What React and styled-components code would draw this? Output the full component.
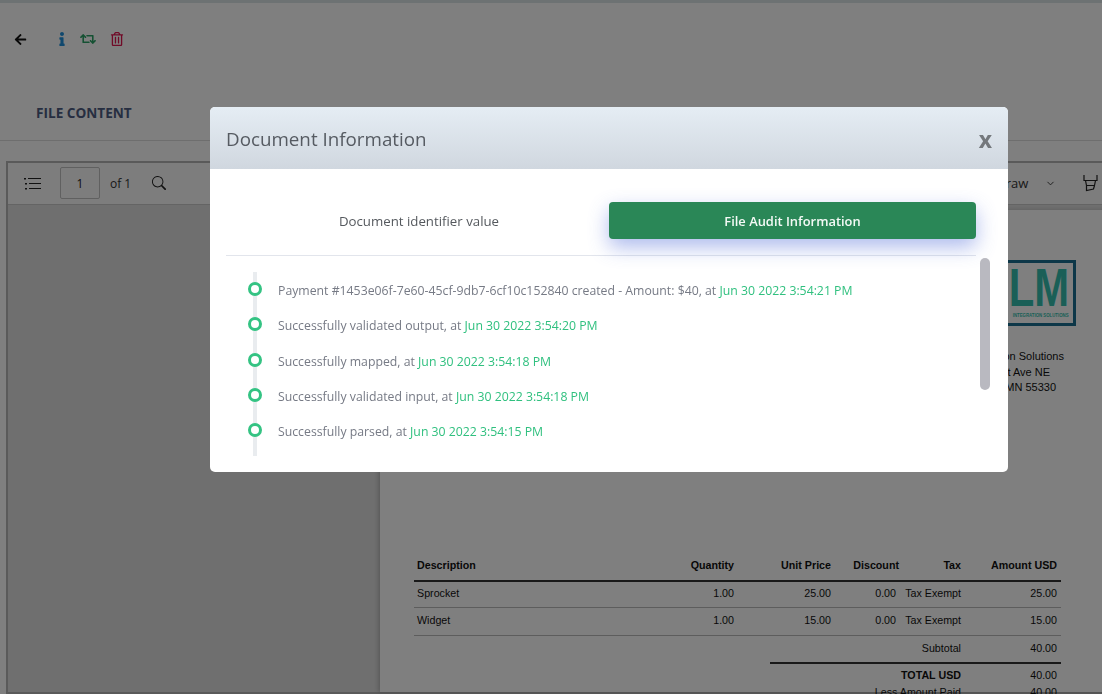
import React from "react";
import styled, { createGlobalStyle } from "styled-components";
import { FaArrowLeft, FaInfo, FaRetweet, FaRegTrashAlt } from "react-icons/fa";
import { FiChevronDown } from "react-icons/fi";
import { BsSearch } from "react-icons/bs";

const GlobalStyle = createGlobalStyle`
  html, body {
    margin: 0;
    padding: 0;
    height: 100%;
    overflow: hidden;
    background: #fff;
    font-family: "Open Sans", "Noto Sans", sans-serif;
  }
  * { box-sizing: border-box; }
`;

const Page = styled.div`
  height: 694px;
  overflow: hidden;
  display: flex;
  flex-direction: column;
`;

const TopStrip = styled.div`
  height: 3px;
  flex: none;
  background: #dbe4e6;
`;

const ActionBar = styled.div`
  height: 72px;
  flex: none;
  display: flex;
  align-items: center;
  padding: 0 0 0 14px;
`;

const IconButton = styled.span`
  display: inline-flex;
  align-items: center;
  justify-content: center;
  margin-left: ${(p) => p.$gap ?? 0}px;
  color: ${(p) => p.$color};
  font-size: ${(p) => p.$size}px;
`;

const TabBar = styled.div`
  height: 66px;
  flex: none;
  padding: 26px 0 0 36px;
  border-bottom: 1px solid #dcdcdc;
`;

const TabLabel = styled.span`
  font-size: 13.6px;
  font-weight: 700;
  line-height: 18px;
  color: #4d5c82;
`;

const Viewer = styled.div`
  margin: 20px 0 0 6px;
  width: 1200px;
  flex: 1;
  border: 2px solid #b5b5b5;
  display: flex;
  flex-direction: column;
  min-height: 0;
  background: #dedede;
`;

const Toolbar = styled.div`
  height: 42px;
  flex: none;
  display: flex;
  align-items: center;
  padding: 0 0 1px 16px;
  background: #fafafa;
  border-bottom: 1px solid #c8c8c8;
  color: #222;
`;

const PageInput = styled.div`
  width: 40px;
  height: 32px;
  margin-left: 19px;
  border: 1px solid #c0c0c0;
  border-radius: 2px;
  display: flex;
  align-items: center;
  justify-content: center;
  font-size: 12px;
`;

const PageCount = styled.span`
  margin-left: 10px;
  font-size: 12px;
  color: #333;
`;

const SearchIcon = styled(BsSearch)`
  margin-left: 21px;
  font-size: 14px;
`;

const DrawSelect = styled.div`
  margin-left: 830px;
  width: 60px;
  display: flex;
  align-items: center;
  justify-content: space-between;
  font-size: 13px;
  color: #333;
`;

const Highlighter = styled.svg`
  margin-left: 27px;
  width: 15px;
  height: 18px;
`;

const ViewerBody = styled.div`
  flex: 1;
  display: flex;
  min-height: 0;
  padding-top: 5px;
`;

const Sidebar = styled.div`
  width: 372px;
  flex: none;
`;

const Sheet = styled.div`
  flex: 1;
  background: #fff;
  box-shadow: -2px 0 4px rgba(0, 0, 0, 0.18);
  padding: 50px 0 0 34px;
  font-family: "Liberation Sans", Arial, sans-serif;
  font-size: 10.7px;
  color: #111;
`;

const Letterhead = styled.div`
  width: 647px;
  height: 289px;
  display: flex;
  flex-direction: column;
  align-items: flex-end;
`;

const Logo = styled.div`
  width: 96px;
  height: 66px;
  margin-right: -15px;
  padding: 4px 4px 0 0;
  border: 3px solid #1a6f90;
  color: #34bfae;
  display: flex;
  flex-direction: column;
  align-items: flex-end;
`;

const LogoLetters = styled.span`
  font-size: 54px;
  line-height: 40px;
  font-weight: 700;
  transform: scaleX(0.773);
  transform-origin: right center;
`;

const LogoCaption = styled.span`
  margin-top: 5px;
  font-size: 6px;
  font-weight: 700;
  line-height: 7px;
  white-space: nowrap;
  transform: scaleX(0.72);
  transform-origin: right center;
`;

const Address = styled.div`
  margin-top: 23px;
  display: flex;
  flex-direction: column;
  align-items: flex-end;
`;

const AddressLine = styled.div`
  font-size: 11px;
  line-height: 15.5px;
  white-space: nowrap;
  margin-right: ${(p) => p.$inset}px;
`;

const InvoiceRow = styled.div`
  width: 647px;
  display: grid;
  grid-template-columns: 224px 100px 97px 68px 62px 96px;
  align-items: center;
  height: ${(p) => p.$height}px;
  padding-bottom: ${(p) => (p.$head ? 0 : 3)}px;
  border-bottom: ${(p) => (p.$head ? "2px solid #333" : "1px solid #bbb")};
  font-weight: ${(p) => (p.$head ? 700 : 400)};
`;

const Cell = styled.span`
  padding: 0 ${(p) => p.$pad ?? 4}px 0 ${(p) => (p.$left ? 3 : 0)}px;
  text-align: ${(p) => (p.$left ? "left" : "right")};
  white-space: nowrap;
`;

const TotalRow = styled.div`
  width: 291px;
  margin-left: 356px;
  display: grid;
  grid-template-columns: 195px 96px;
  align-items: center;
  height: ${(p) => p.$height}px;
  padding-bottom: ${(p) => (p.$rule ? 2 : 0)}px;
  border-bottom: ${(p) => (p.$rule ? "2px solid #333" : "none")};
`;

const TotalLabel = styled(Cell)`
  font-weight: ${(p) => (p.$bold ? 700 : 400)};
`;

const Backdrop = styled.div`
  position: fixed;
  inset: 0;
  background: rgba(0, 0, 0, 0.5);
`;

const Modal = styled.div`
  position: fixed;
  left: 210px;
  top: 107px;
  width: 798px;
  height: 365px;
  background: #fff;
  border-radius: 5px;
  overflow: hidden;
  display: flex;
  flex-direction: column;
`;

const ModalHeader = styled.div`
  height: 62px;
  flex: none;
  display: flex;
  align-items: center;
  justify-content: space-between;
  padding: 2px 16px 0;
  background: linear-gradient(180deg, #e5edf4 0%, #d0d7df 100%);
`;

const ModalTitle = styled.h2`
  margin: 0;
  font-size: 18.8px;
  font-weight: 400;
  color: #565b62;
`;

const CloseMark = styled.span`
  font-size: 23px;
  font-weight: 700;
  line-height: 20px;
  color: #74787c;
`;

const ModalBody = styled.div`
  flex: 1;
  padding: 33px 32px 0 16px;
  position: relative;
`;

const SwitchRow = styled.div`
  display: grid;
  grid-template-columns: 383px 367px;
  padding-bottom: 16px;
  border-bottom: 1px solid #e2e5ec;
`;

const TabOption = styled.div`
  height: 37px;
  padding: 1px 0 0 ${(p) => (p.$active ? 0 : 3)}px;
  display: flex;
  align-items: center;
  justify-content: center;
  font-size: ${(p) => (p.$active ? 12.9 : 13.25)}px;
  border-radius: 4px;
  color: ${(p) => (p.$active ? "#f4faf6" : "#55595e")};
  background: ${(p) => (p.$active ? "#2a8757" : "transparent")};
  font-weight: ${(p) => (p.$active ? 600 : 400)};
  box-shadow: ${(p) => (p.$active ? "0 8px 20px rgba(75, 105, 215, 0.45)" : "none")};
`;

const Timeline = styled.ul`
  list-style: none;
  margin: 16px 0 0 27px;
  padding: 0;
  height: 184px;
  border-left: 4px solid #e9ecef;
`;

const TimelineItem = styled.li`
  height: 35.3px;
  display: flex;
  align-items: center;
  margin-left: -9px;
`;

const Dot = styled.span`
  width: 14px;
  height: 14px;
  flex: none;
  border-radius: 50%;
  border: 3px solid #34c383;
  background: #fff;
  margin-top: -1px;
`;

const EventText = styled.span`
  margin: 2px 0 0 16px;
  font-size: 12.28px;
  color: #767a85;
  white-space: nowrap;
`;

const EventTime = styled.span`
  color: #30c07f;
`;

const ScrollThumb = styled.div`
  position: absolute;
  left: 770px;
  top: 89px;
  width: 10px;
  height: 132px;
  border-radius: 5px;
  background: #b9b9c0;
`;

const events = [
  ["Payment #1453e06f-7e60-45cf-9db7-6cf10c152840 created - Amount: $40, at ", "Jun 30 2022 3:54:21 PM"],
  ["Successfully validated output, at ", "Jun 30 2022 3:54:20 PM"],
  ["Successfully mapped, at ", "Jun 30 2022 3:54:18 PM"],
  ["Successfully validated input, at ", "Jun 30 2022 3:54:18 PM"],
  ["Successfully parsed, at ", "Jun 30 2022 3:54:15 PM"],
];

const lineItems = [
  { name: "Sprocket", price: "25.00", height: 26 },
  { name: "Widget", price: "15.00", height: 28 },
];

export default function App() {
  return (
    <Page>
      <GlobalStyle />
      <TopStrip />
      <ActionBar>
        <IconButton $size={13} $color="#111"><FaArrowLeft /></IconButton>
        <IconButton $gap={28} $size={14} $color="#2191dc"><FaInfo /></IconButton>
        <IconButton $gap={11} $size={16} $color="#2aa366"><FaRetweet /></IconButton>
        <IconButton $gap={14} $size={14} $color="#e0144f"><FaRegTrashAlt /></IconButton>
      </ActionBar>
      <TabBar>
        <TabLabel>FILE CONTENT</TabLabel>
      </TabBar>
      <Viewer>
        <Toolbar>
          <svg width="17" height="13" viewBox="0 0 17 13" fill="none" stroke="#222">
            <path d="M4 1.5h13M5 6.5h12M5 11.5h12" />
            <path d="M0 1h2v1.5H0zM1 6h2v1.5H1zM1 11h2v1.5H1z" fill="#222" stroke="none" />
          </svg>
          <PageInput>1</PageInput>
          <PageCount>of 1</PageCount>
          <SearchIcon />
          <DrawSelect>
            Draw
            <FiChevronDown size={11} />
          </DrawSelect>
          <Highlighter viewBox="0 0 15 18" fill="none" stroke="#222" strokeWidth="1.2">
            <path d="M1 1v5.5h13V1M2.5 6.5l1 5h8l1-5M3.5 11.5v5l7-1.5 1-3.5" />
          </Highlighter>
        </Toolbar>
        <ViewerBody>
          <Sidebar />
          <Sheet>
            <Letterhead>
              <Logo>
                <LogoLetters>LM</LogoLetters>
                <LogoCaption>INTEGRATION SOLUTIONS</LogoCaption>
              </Logo>
              <Address>
                <AddressLine $inset={-3}>LM Integration Solutions</AddressLine>
                <AddressLine $inset={11}>1234 Street Ave NE</AddressLine>
                <AddressLine $inset={5}>Elk River, MN 55330</AddressLine>
              </Address>
            </Letterhead>
            <InvoiceRow $head $height={33}>
              <Cell $left>Description</Cell>
              <Cell>Quantity</Cell>
              <Cell>Unit Price</Cell>
              <Cell>Discount</Cell>
              <Cell>Tax</Cell>
              <Cell>Amount USD</Cell>
            </InvoiceRow>
            {lineItems.map((item) => (
              <InvoiceRow key={item.name} $height={item.height}>
                <Cell $left>{item.name}</Cell>
                <Cell>1.00</Cell>
                <Cell>{item.price}</Cell>
                <Cell $pad={7}>0.00</Cell>
                <Cell>Tax Exempt</Cell>
                <Cell>{item.price}</Cell>
              </InvoiceRow>
            ))}
            <TotalRow $rule $height={28}>
              <TotalLabel>Subtotal</TotalLabel>
              <Cell>40.00</Cell>
            </TotalRow>
            <TotalRow $height={22}>
              <TotalLabel $bold>TOTAL USD</TotalLabel>
              <Cell>40.00</Cell>
            </TotalRow>
            <TotalRow $height={12}>
              <TotalLabel>Less Amount Paid</TotalLabel>
              <Cell>40.00</Cell>
            </TotalRow>
          </Sheet>
        </ViewerBody>
      </Viewer>
      <Backdrop />
      <Modal>
        <ModalHeader>
          <ModalTitle>Document Information</ModalTitle>
          <CloseMark>x</CloseMark>
        </ModalHeader>
        <ModalBody>
          <SwitchRow>
            <TabOption>Document identifier value</TabOption>
            <TabOption $active>File Audit Information</TabOption>
          </SwitchRow>
          <Timeline>
            {events.map(([text, time]) => (
              <TimelineItem key={text + time}>
                <Dot />
                <EventText>
                  {text}
                  <EventTime>{time}</EventTime>
                </EventText>
              </TimelineItem>
            ))}
          </Timeline>
          <ScrollThumb />
        </ModalBody>
      </Modal>
    </Page>
  );
}
